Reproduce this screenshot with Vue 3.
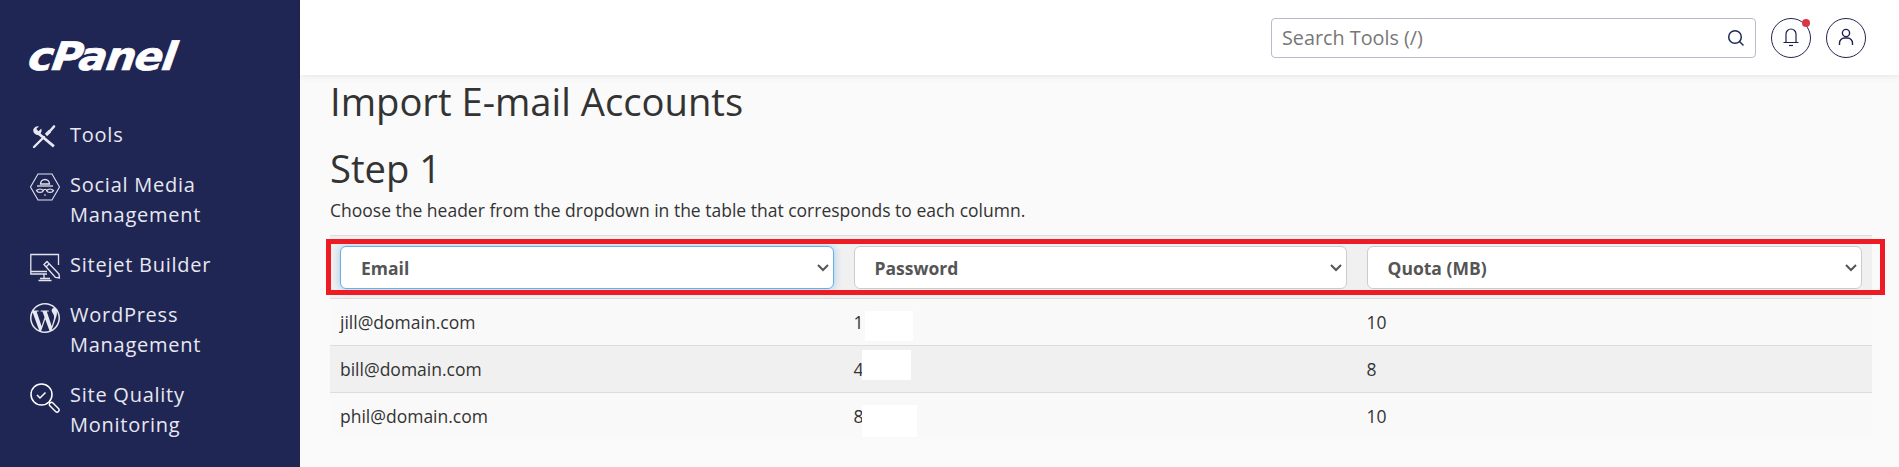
<script setup>
const nav = [
  { id: 'tools', lines: ['Tools'] },
  { id: 'social', lines: ['Social Media', 'Management'] },
  { id: 'sitejet', lines: ['Sitejet Builder'] },
  { id: 'wp', lines: ['WordPress', 'Management'] },
  { id: 'quality', lines: ['Site Quality', 'Monitoring'] }
]
const rows = [
  { email: 'jill@domain.com', pw: '1', quota: '10', mask: 'm1' },
  { email: 'bill@domain.com', pw: '4', quota: '8', mask: 'm2' },
  { email: 'phil@domain.com', pw: '8', quota: '10', mask: 'm3' }
]
const heads = ['Email', 'Password', 'Quota (MB)']
</script>

<template>
  <div class="page">
    <aside class="side">
      <div class="logo"><span>cPanel</span></div>
      <nav class="nav">
        <a v-for="n in nav" :key="n.id" class="item" :class="n.id">
          <svg class="ic" viewBox="0 0 30 30" fill="none" stroke="#e4e4ec" stroke-width="1.3">
            <template v-if="n.id === 'tools'">
              <path d="M9 3.200 6.300 6l2.200 2.300 2.800-2.700A5 5 0 0 1 10.600 10.500L24.800 22.300 23 24.500 8.500 12.300A5.200 5.200 0 0 1 3.200 6.500 5.600 5.600 0 0 1 9 3.200Z" fill="#e8e8f0" stroke="none"/>
              <path d="M4 24l10-10" stroke="#e8e8f0" stroke-width="2.400" stroke-linecap="round"/>
              <path d="M16 12l4-4" stroke="#e8e8f0" stroke-width="3.200"/>
              <path d="M20 8l4-4.500" stroke="#e8e8f0" stroke-width="2.600" stroke-linecap="round"/>
            </template>
            <template v-else-if="n.id === 'social'">
              <path d="M8 1h14l7.500 13L22 27H8L.5 14Z" stroke-width="1.100"/>
              <path d="M10.500 11a4.500 4.500 0 0 1 9 0Z" stroke-width="1.300"/>
              <path d="M7 13h16" stroke-width="1.300"/>
              <path d="M6.500 17.500c2-2 5-2 7 0-1 2.500-6 2.500-7 0ZM23.500 17.500c-2-2-5-2-7 0 1 2.500 6 2.500 7 0Z" stroke-width="1.200"/>
              <path d="M13.500 16.500h3M14 22h2" stroke-width="1.200"/>
            </template>
            <template v-else-if="n.id === 'sitejet'">
              <path d="M28.500 12V1.500H.8V21H17M.8 18.500H17M14 21v5M8.500 27.500h13M10 25.500h10" stroke-width="1.300"/>
              <path d="M14 11.500 17 8.500 29 21l.4 4-4-.6Z" fill="#1f2654" stroke-width="1.400"/>
              <path d="M16 14l3-3" stroke-width="1.200"/>
            </template>
            <template v-else-if="n.id === 'wp'">
              <path transform="scale(1.250)" fill="#e8e8f0" stroke="none" d="M21.469 6.825c.84 1.537 1.318 3.3 1.318 5.175 0 3.979-2.156 7.456-5.363 9.325l3.295-9.527c.615-1.54.82-2.771.82-3.864 0-.405-.026-.78-.07-1.11m-7.981.105c.647-.03 1.232-.105 1.232-.105.582-.075.514-.93-.067-.899 0 0-1.755.135-2.88.135-1.064 0-2.85-.15-2.85-.15-.585-.03-.661.855-.075.885 0 0 .54.061 1.125.09l1.68 4.605-2.37 7.08L5.354 6.9c.649-.03 1.234-.1 1.234-.1.585-.075.516-.93-.065-.896 0 0-1.746.138-2.874.138-.2 0-.438-.008-.69-.015C4.911 3.15 8.235 1.215 12 1.215c2.809 0 5.365 1.072 7.286 2.833-.046-.003-.091-.009-.141-.009-1.06 0-1.812.923-1.812 1.914 0 .89.513 1.643 1.06 2.531.411.72.89 1.643.89 2.977 0 .915-.354 1.994-.821 3.479l-1.075 3.585-3.9-11.61.001.014zM12 22.784c-1.059 0-2.081-.153-3.048-.437l3.237-9.406 3.315 9.087c.024.053.05.101.078.149-1.12.393-2.325.609-3.582.609M1.211 12c0-1.564.336-3.05.935-4.39L7.29 21.709C3.694 19.96 1.212 16.271 1.211 12M12 0C5.385 0 0 5.385 0 12s5.385 12 12 12 12-5.385 12-12S18.615 0 12 0"/>
            </template>
            <template v-else>
              <circle cx="11.500" cy="11.500" r="10.500" stroke="#fff" stroke-width="1.500"/>
              <path d="M7 12l3 3 5.500-5.500" stroke="#fff" stroke-width="1.500"/>
              <path d="M19 19l2 2" stroke="#fff" stroke-width="1.500"/>
              <path d="M21.500 21.500l5.500 5.500" stroke="#fff" stroke-width="5.500" stroke-linecap="round"/>
              <path d="M21.500 21.500l5.500 5.500" stroke="#1f2654" stroke-width="2.800" stroke-linecap="round"/>
            </template>
          </svg>
          <span class="lbl"><span v-for="l in n.lines" :key="l" class="ln">{{ l }}</span></span>
        </a>
      </nav>
    </aside>
    <div class="main">
      <header class="top">
        <div class="search">
          <span class="ph">Search Tools (/)</span>
          <svg width="18" height="18" viewBox="0 0 18 18" fill="none" stroke="#1d2b4f" stroke-width="1.500"><circle cx="8" cy="8" r="6.300"/><path d="M12.500 12.500 16.500 16.500"/></svg>
        </div>
        <button class="circle">
          <svg width="18" height="22" viewBox="0 0 18 22" fill="none" stroke="#1d2050" stroke-width="1.200"><path d="M4 15V7a5 5 0 0 1 10 0v8M1.500 15.500h15"/><path d="M7 18.500h4"/></svg>
          <span class="dot"></span>
        </button>
        <button class="circle">
          <svg width="18" height="22" viewBox="0 0 18 22" fill="none" stroke="#1d2050" stroke-width="1.400"><circle cx="9" cy="6" r="3.600"/><path d="M2.500 18v-2a5 5 0 0 1 5-5h3a5 5 0 0 1 5 5v2"/></svg>
        </button>
      </header>
      <section class="content">
        <h1>Import E-mail Accounts</h1>
        <h2>Step 1</h2>
        <p>Choose the header from the dropdown in the table that corresponds to each column.</p>
        <div class="table">
          <div class="headrow">
            <div v-for="(h, i) in heads" :key="h" class="cell">
              <div class="sel" :class="{ focus: i === 0 }">
                <span>{{ h }}</span>
                <svg width="12" height="8" viewBox="0 0 12 8" fill="none" stroke="#555" stroke-width="2"><path d="M1 1l5 5 5-5"/></svg>
              </div>
            </div>
            <div class="redbox"></div>
          </div>
          <div v-for="(r, i) in rows" :key="r.email" class="row" :class="{ alt: i === 1 }">
            <div class="cell">{{ r.email }}</div>
            <div class="cell pw">{{ r.pw }}<span class="mask" :class="r.mask"></span></div>
            <div class="cell">{{ r.quota }}</div>
          </div>
        </div>
      </section>
    </div>
  </div>
</template>

<style>
html, body { margin: 0; background: #fafafa; }
</style>
<style scoped>
.page { display: flex; width: 1899px; height: 467px; overflow: hidden; font-family: "Open Sans", sans-serif; color: #333; }
.side { width: 300px; flex: none; background: #1f2654; color: #e8e8f0; box-sizing: border-box; padding: 37px 0 0 30px; }
.logo { height: 40px; margin-left: -4px; font-family: "DejaVu Sans", sans-serif; font-weight: 700; font-style: oblique; font-size: 39px; line-height: 40px; color: #fff; letter-spacing: -1.200px; white-space: nowrap; -webkit-text-stroke: .7px #fff; }
.logo span { display: inline-block; transform: skewX(-8deg) scaleX(1.080); transform-origin: 0 100%; }
.nav { display: flex; flex-direction: column; gap: 20px; margin-top: 43px; }
.item { display: flex; gap: 10px; font-size: 20px; line-height: 30px; letter-spacing: .75px; }
.ic { width: 30px; height: 30px; flex: none; margin-top: 3px; margin-bottom: -3px; overflow: visible; }
.lbl { display: flex; flex-direction: column; }
.ln { display: block; white-space: nowrap; }
.main { flex: 1; min-width: 0; background: #fafafa; }
.top { height: 75px; background: #fff; box-shadow: 0 2px 6px rgba(0,0,0,.07); display: flex; align-items: center; box-sizing: border-box; padding: 0 33px 0 971px; position: relative; }
.search { width: 485px; height: 40px; flex: none; box-sizing: border-box; border: 1px solid #bdb9c9; border-radius: 4px; display: flex; align-items: center; justify-content: space-between; padding: 0 10px; }
.ph { font-size: 19.800px; color: #777; }
.circle { width: 40px; height: 40px; padding: 0; border: 1px solid #23264f; border-radius: 50%; background: #fff; position: relative; display: flex; align-items: center; justify-content: center; margin-left: 15px; }
.dot { position: absolute; width: 8px; height: 8px; border-radius: 50%; background: #dc3545; top: 0; right: 0; }
.content { padding: 6px 27px 0 30px; }
h1 { margin: 0; font-weight: 400; font-size: 38.200px; line-height: 40px; color: #333; }
h2 { margin: 27px 0 0; font-weight: 400; font-size: 38.200px; line-height: 40px; color: #333; }
p { margin: 10px 0 0; font-size: 17.500px; line-height: 24px; }
.table { margin-top: 13px; }
.headrow { display: grid; grid-template-columns: 513.500px 513px 515.500px; height: 64px; box-sizing: border-box; padding-top: 1px; border-top: 1px solid #ddd; border-bottom: 1px solid #ddd; background: #f0f0f0; position: relative; align-items: center; }
.cell { padding: 0 10px; }
.sel { height: 43px; box-sizing: border-box; background: #fff; border: 1px solid #ccc; border-radius: 6px; display: flex; align-items: center; justify-content: space-between; padding: 0 4px 0 20px; font-weight: 700; color: #555; font-size: 17.500px; }
.sel.focus { border-color: #66afe9; box-shadow: 0 0 8px rgba(102,175,233,.6); }
.redbox { position: absolute; left: -4px; right: -13px; top: 3px; bottom: 3px; border: 5px solid #ed1c24; pointer-events: none; }
.row { display: grid; grid-template-columns: 513.500px 513px 515.500px; height: 47px; align-items: center; box-sizing: border-box; border-bottom: 1px solid #ddd; background: #f9f9f9; font-size: 17.500px; }
.row:last-child { border-bottom: 0; height: 45px; }
.row.alt { background: #f0f0f0; }
.pw { position: relative; }
.mask { position: absolute; background: #fff; }
.m1 { left: 21px; top: 1px; width: 48px; height: 30px; }
.m2 { left: 18px; top: -7px; width: 49px; height: 30px; }
.m3 { left: 18px; top: 1px; width: 55px; height: 32px; }
</style>
